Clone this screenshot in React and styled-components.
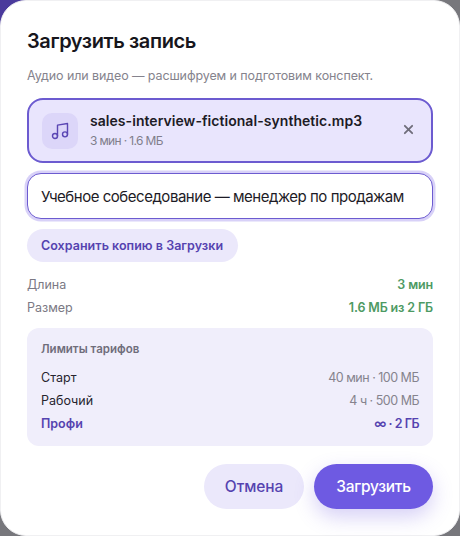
import React from 'react';
import styled, { createGlobalStyle } from 'styled-components';

const Global = createGlobalStyle`
  html, body {
    margin: 0;
    padding: 0;
    width: 460px;
    height: 536px;
    overflow: hidden;
  }
  * { box-sizing: border-box; }
`;

const Backdrop = styled.div`
  width: 460px;
  height: 536px;
  background: radial-gradient(circle at 0 0, #4a3a9c 0, #4a3a9c 30px, #77777c 70px);
  font-family: Inter, "Noto Sans", sans-serif;
`;

const Modal = styled.div`
  width: 460px;
  height: 536px;
  padding: 28px 26px 26px;
  background: #fff;
  border: 1px solid #f0f0f2;
  border-radius: 26px;
  display: flex;
  flex-direction: column;
`;

const Title = styled.h2`
  margin: 0;
  font-size: 20px;
  line-height: 24px;
  font-weight: 600;
  letter-spacing: -0.4px;
  color: #17161c;
`;

const Subtitle = styled.p`
  margin: 15px 0 0;
  font-size: 12.5px;
  line-height: 16px;
  letter-spacing: -0.1px;
  color: #85838d;
`;

const FileCard = styled.div`
  margin-top: 14px;
  height: 65px;
  padding: 0 13px;
  display: flex;
  align-items: center;
  gap: 12px;
  background: #e9e5fd;
  border: 2px solid #6c5bd0;
  border-radius: 16px;
`;

const FileIcon = styled.div`
  width: 36px;
  height: 36px;
  flex: none;
  display: flex;
  align-items: center;
  justify-content: center;
  background: #dcd6f9;
  border-radius: 10px;
  color: #5a46b4;
`;

const FileInfo = styled.div`
  flex: 1;
  min-width: 0;
  margin-bottom: 2px;
`;

const FileName = styled.div`
  font-size: 14px;
  line-height: 18px;
  font-weight: 600;
  letter-spacing: 0.05px;
  color: #1d1b26;
`;

const FileMeta = styled.div`
  margin-top: 3px;
  font-size: 12px;
  line-height: 15px;
  letter-spacing: -0.65px;
  color: #807e8b;
`;

const RemoveButton = styled.button`
  padding: 0;
  margin: 0 4px 2px 0;
  width: 12px;
  height: 12px;
  display: flex;
  align-items: center;
  justify-content: center;
  border: none;
  background: none;
  color: #6f6d7a;
`;

const NameField = styled.input`
  margin-top: 10px;
  width: 100%;
  height: 46px;
  padding: 0 13px;
  font-family: inherit;
  font-size: 15px;
  letter-spacing: -0.47px;
  color: #1d1b26;
  background: #fff;
  border: 1.5px solid #6c5bd0;
  border-radius: 14px;
  box-shadow: 0 0 0 2.5px #d8d1f8;
  outline: none;
`;

const SaveButton = styled.button`
  margin-top: 10px;
  align-self: flex-start;
  height: 33px;
  padding: 0 15px 0 14px;
  font-family: inherit;
  font-size: 12.5px;
  font-weight: 600;
  letter-spacing: 0.03px;
  color: #5543b0;
  background: #ebe8fb;
  border: none;
  border-radius: 17px;
`;

const Stats = styled.div`
  margin-top: 13.5px;
  display: flex;
  flex-direction: column;
  gap: 5px;
`;

const Row = styled.div`
  display: flex;
  justify-content: space-between;
  align-items: center;
  height: 18px;
  font-size: 12.5px;
`;

const StatLabel = styled.span`
  color: #7b7984;
`;

const StatValue = styled.span`
  font-weight: 600;
  letter-spacing: -0.15px;
  color: #4d9a63;
`;

const Limits = styled.div`
  margin-top: 11.5px;
  padding: 14px;
  background: #f0eefb;
  border-radius: 12px;
  display: flex;
  flex-direction: column;
  gap: 5px;
`;

const LimitsTitle = styled.div`
  margin-bottom: 7px;
  font-size: 11.5px;
  line-height: 14px;
  font-weight: 600;
  color: #6f6d7a;
`;

const PlanName = styled.span`
  font-weight: ${p => (p.$active ? 600 : 400)};
  color: ${p => (p.$active ? '#5543b0' : '#26242e')};
`;

const PlanValue = styled.span`
  font-weight: ${p => (p.$active ? 600 : 400)};
  letter-spacing: -0.5px;
  color: ${p => (p.$active ? '#5543b0' : '#85838d')};
`;

const Actions = styled.div`
  margin-top: 18px;
  display: flex;
  justify-content: flex-end;
  gap: 10px;
`;

const Button = styled.button`
  height: 45px;
  width: ${p => (p.$primary ? '119px' : '100px')};
  font-family: inherit;
  font-size: 15.5px;
  font-weight: 500;
  letter-spacing: ${p => (p.$primary ? '-0.3px' : '-0.1px')};
  color: ${p => (p.$primary ? '#fff' : '#5543b0')};
  background: ${p => (p.$primary ? '#6e5ae2' : '#ebe8fb')};
  border: none;
  border-radius: 23px;
  box-shadow: ${p => (p.$primary ? '0 8px 20px rgba(108, 85, 224, 0.28)' : 'none')};
`;

const plans = [
  { name: 'Старт', value: '40 мин · 100 МБ' },
  { name: 'Рабочий', value: '4 ч · 500 МБ' },
  { name: 'Профи', value: '∞ · 2 ГБ', active: true },
];

export default function App() {
  return (
    <Backdrop>
      <Global />
      <Modal>
        <Title>Загрузить запись</Title>
        <Subtitle>Аудио или видео — расшифруем и подготовим конспект.</Subtitle>
        <FileCard>
          <FileIcon>
            <svg width="20" height="20" viewBox="0 0 24 24" fill="none" stroke="currentColor" strokeWidth="1.7" strokeLinecap="round" strokeLinejoin="round">
              <path d="M9 18V5l12-2v13" />
              <circle cx="6" cy="18" r="3" />
              <circle cx="18" cy="16" r="3" />
            </svg>
          </FileIcon>
          <FileInfo>
            <FileName>sales-interview-fictional-synthetic.mp3</FileName>
            <FileMeta>3 мин · 1.6 МБ</FileMeta>
          </FileInfo>
          <RemoveButton aria-label="Убрать файл">
            <svg width="11" height="11" viewBox="0 0 12 12" fill="none" stroke="currentColor" strokeWidth="2" strokeLinecap="round">
              <path d="M2 2l8 8M10 2l-8 8" />
            </svg>
          </RemoveButton>
        </FileCard>
        <NameField defaultValue="Учебное собеседование — менеджер по продажам" />
        <SaveButton>Сохранить копию в Загрузки</SaveButton>
        <Stats>
          <Row>
            <StatLabel>Длина</StatLabel>
            <StatValue>3 мин</StatValue>
          </Row>
          <Row>
            <StatLabel>Размер</StatLabel>
            <StatValue>1.6 МБ из 2 ГБ</StatValue>
          </Row>
        </Stats>
        <Limits>
          <LimitsTitle>Лимиты тарифов</LimitsTitle>
          {plans.map(plan => (
            <Row key={plan.name}>
              <PlanName $active={plan.active}>{plan.name}</PlanName>
              <PlanValue $active={plan.active}>{plan.value}</PlanValue>
            </Row>
          ))}
        </Limits>
        <Actions>
          <Button>Отмена</Button>
          <Button $primary>Загрузить</Button>
        </Actions>
      </Modal>
    </Backdrop>
  );
}
